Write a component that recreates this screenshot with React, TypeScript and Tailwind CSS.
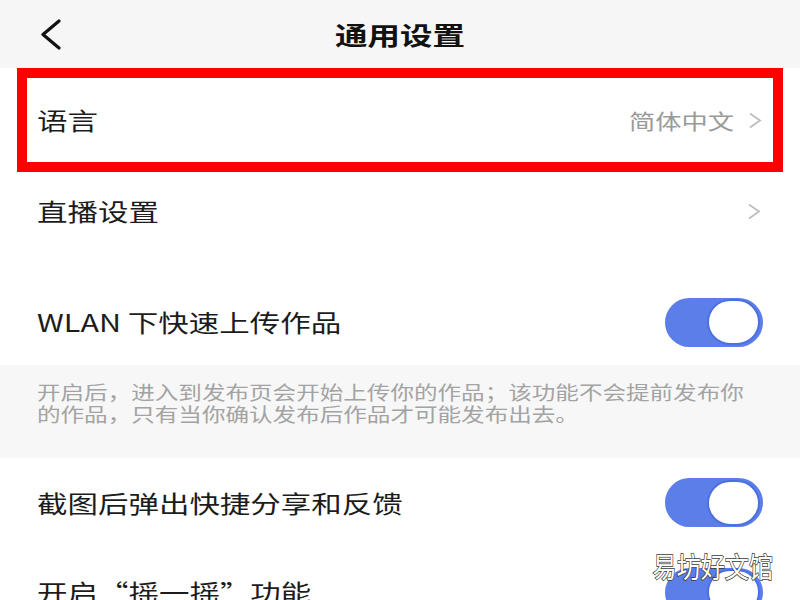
import React from 'react';

const Chevron = ({ className = '' }: { className?: string }) => (
    <svg width="14" height="17" viewBox="0 0 14 17" fill="none" className={className}>
        <path d="M2 1.5 L12 8.5 L2 15.5" stroke="#bdbdbd" strokeWidth="1.8" strokeLinejoin="miter" />
    </svg>
);

const Toggle = () => (
    <div className="w-[98px] h-[49px] rounded-full bg-[#5b7ee8] flex items-center justify-end pr-[3px]">
        <div className="w-[53px] h-[46px] rounded-full bg-white border-[2.5px] border-[#4c70df]" />
    </div>
);

const Label = ({ children }: any) => (
    <span className="inline-block origin-left scale-x-[1.27] text-[24px] text-[#1c1c1c] leading-none whitespace-pre">
        {children}
    </span>
);

const Row = ({ label, right, className = '' }: any) => (
    <div className={`flex items-center justify-between pl-[37px] pr-[37px] ${className}`}>
        <Label>{label}</Label>
        {right}
    </div>
);

export default function App() {
    return (
        <div className="relative w-[800px] h-[600px] overflow-hidden bg-white font-['Noto_Sans_CJK_SC','Noto_Sans',sans-serif]">
            {/* Header */}
            <div className="h-[68px] bg-[#f6f6f6] grid grid-cols-[1fr_auto_1fr] items-center">
                <div className="pl-[40px] pt-[1px]">
                    <svg width="22" height="31" viewBox="0 0 22 31" fill="none">
                        <path d="M19 2 L3 15.5 L19 29" stroke="#111" strokeWidth="3.2" strokeLinecap="round" strokeLinejoin="round" />
                    </svg>
                </div>
                <h1 className="inline-block scale-x-[1.3] text-[25px] font-bold text-[#111] leading-none">通用设置</h1>
                <div />
            </div>

            {/* Language (highlighted) */}
            <div className="mx-[17px] h-[104px] border-[10px] border-[#ff0000] flex items-center justify-between pl-[10px] pr-[11px]">
                <Label>语言</Label>
                <div className="flex items-center gap-[14px]">
                    <span className="inline-block origin-right scale-x-[1.25] text-[21px] text-[#9a9a9a] leading-none">简体中文</span>
                    <Chevron />
                </div>
            </div>

            <Row label="直播设置" className="h-[78px] pr-[39px]" right={<Chevron />} />
            <Row label="WLAN 下快速上传作品" className="mt-[29px] h-[86px] pr-[37px]" right={<Toggle />} />

            {/* Description */}
            <div className="h-[93px] bg-[#f7f7f7] px-[37px] pt-[16px]">
                <p className="w-[572px] origin-left scale-x-[1.24] text-[19px] leading-[22px] text-[#a3a3a3]">
                    开启后，进入到发布页会开始上传你的作品；该功能不会提前发布你的作品，只有当你确认发布后作品才可能发布出去。
                </p>
            </div>

            <Row label="截图后弹出快捷分享和反馈" className="h-[89px]" right={<Toggle />} />
            <Row label="开启“摇一摇”功能" className="h-[90px]" right={<Toggle />} />

            {/* Watermark */}
            <div className="absolute top-[552px] right-[27px] origin-right scale-x-[0.86] text-[28px] leading-none text-white whitespace-nowrap [-webkit-text-stroke:1.5px_#3a3a3a] [paint-order:stroke_fill]">
                易坊好文馆
            </div>
        </div>
    );
}
